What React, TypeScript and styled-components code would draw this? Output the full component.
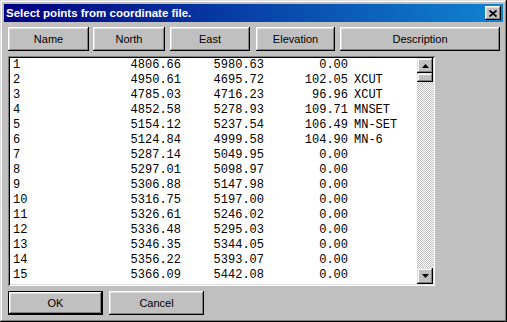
import React from 'react';
import styled, { createGlobalStyle } from 'styled-components';

const GlobalStyle = createGlobalStyle`
  html, body {
    margin: 0;
    padding: 0;
    background: #c0c0c0;
  }
  body {
    font-family: "Liberation Sans", Arial, sans-serif;
  }
`;

interface Point {
  id: string,
  north: string,
  east: string,
  elev: string,
  desc: string,
}

const points: Point[] = [
  { id: '1', north: '4806.66', east: '5980.63', elev: '0.00', desc: '' },
  { id: '2', north: '4950.61', east: '4695.72', elev: '102.05', desc: 'XCUT' },
  { id: '3', north: '4785.03', east: '4716.23', elev: '96.96', desc: 'XCUT' },
  { id: '4', north: '4852.58', east: '5278.93', elev: '109.71', desc: 'MNSET' },
  { id: '5', north: '5154.12', east: '5237.54', elev: '106.49', desc: 'MN-SET' },
  { id: '6', north: '5124.84', east: '4999.58', elev: '104.90', desc: 'MN-6' },
  { id: '7', north: '5287.14', east: '5049.95', elev: '0.00', desc: '' },
  { id: '8', north: '5297.01', east: '5098.97', elev: '0.00', desc: '' },
  { id: '9', north: '5306.88', east: '5147.98', elev: '0.00', desc: '' },
  { id: '10', north: '5316.75', east: '5197.00', elev: '0.00', desc: '' },
  { id: '11', north: '5326.61', east: '5246.02', elev: '0.00', desc: '' },
  { id: '12', north: '5336.48', east: '5295.03', elev: '0.00', desc: '' },
  { id: '13', north: '5346.35', east: '5344.05', elev: '0.00', desc: '' },
  { id: '14', north: '5356.22', east: '5393.07', elev: '0.00', desc: '' },
  { id: '15', north: '5366.09', east: '5442.08', elev: '0.00', desc: '' },
];

const columns = [
  { label: 'Name', w: 81, gap: 0 },
  { label: 'North', w: 72, gap: 4 },
  { label: 'East', w: 80, gap: 5 },
  { label: 'Elevation', w: 79, gap: 6 },
  { label: 'Description', w: 160, gap: 5 },
];

const Window = styled.div`
  width: 507px;
  height: 322px;
  box-sizing: border-box;
  padding: 4px;
  background: #c0c0c0;
  box-shadow: inset -1px -1px #000, inset 1px 1px #dfdfdf,
    inset -2px -2px #808080, inset 2px 2px #fff;
  display: flex;
  flex-direction: column;
`;

const TitleBar = styled.div`
  height: 18px;
  display: flex;
  align-items: center;
  justify-content: space-between;
  padding: 0 2px 0 2px;
  background: linear-gradient(to right, #000080, #1084d0);
`;

const Title = styled.span`
  color: #fff;
  font-weight: bold;
  font-size: 11.5px;
`;

const CloseButton = styled.div`
  width: 16px;
  height: 14px;
  background: #c0c0c0;
  box-shadow: inset -1px -1px #000, inset 1px 1px #fff,
    inset -2px -2px #808080, inset 2px 2px #dfdfdf;
  display: flex;
  align-items: center;
  justify-content: center;
`;

const Body = styled.div`
  padding: 0 3px 0 4px;
  display: flex;
  flex-direction: column;
`;

const HeaderRow = styled.div`
  display: flex;
  margin-top: 5px;
`;

const Button = styled.div<{ $w: number, $gap?: number, $default?: boolean }>`
  width: ${p => p.$w}px;
  height: 24px;
  margin-left: ${p => p.$gap || 0}px;
  box-sizing: border-box;
  display: flex;
  align-items: center;
  justify-content: center;
  font-size: 11px;
  color: #000;
  background: #c0c0c0;
  box-shadow: ${p => p.$default
    ? 'inset 0 0 0 1px #000, inset -2px -2px #000, inset 2px 2px #fff, inset -3px -3px #808080, inset 3px 3px #dfdfdf'
    : 'inset -1px -1px #000, inset 1px 1px #fff, inset -2px -2px #808080, inset 2px 2px #dfdfdf'};
`;

const ListBox = styled.div`
  margin-top: 5px;
  width: 427px;
  height: 230px;
  box-sizing: border-box;
  padding: 2px;
  background: #fff;
  box-shadow: inset 1px 1px #808080, inset -1px -1px #fff,
    inset 2px 2px #000, inset -2px -2px #dfdfdf;
  display: flex;
`;

const Rows = styled.div`
  flex: 1;
  overflow: hidden;
  padding-left: 3px;
  font-family: "Liberation Mono", "Courier New", monospace;
  font-size: 12px;
  color: #000;
`;

const Row = styled.div`
  display: grid;
  grid-template-columns: 97px 71px 83px 84px auto;
  height: 15px;
  line-height: 15px;
  white-space: pre;
`;

const Cell = styled.span<{ $num?: boolean }>`
  text-align: ${p => p.$num ? 'right' : 'left'};
`;

const Desc = styled.span`
  padding-left: 6px;
`;

const ScrollBar = styled.div`
  width: 16px;
  display: flex;
  flex-direction: column;
`;

const ScrollButton = styled.div<{ $h: number }>`
  height: ${p => p.$h}px;
  background: #c0c0c0;
  box-shadow: inset -1px -1px #000, inset 1px 1px #dfdfdf,
    inset -2px -2px #808080, inset 2px 2px #fff;
  display: flex;
  align-items: center;
  justify-content: center;
`;

const Track = styled.div`
  flex: 1;
  background-image: conic-gradient(#c0c0c0 25%, #fff 0 50%, #c0c0c0 0 75%, #fff 0);
  background-size: 2px 2px;
`;

const Footer = styled.div`
  display: flex;
  margin-top: 5px;
`;

const Arrow: React.FC<{ down?: boolean }> = ({ down }) => (
  <svg width="7" height="4" viewBox="0 0 7 4">
    <polygon points={down ? '0,0 7,0 3.5,4' : '3.5,0 7,4 0,4'} fill="#000" />
  </svg>
);

const CloseIcon = () => (
  <svg width="8" height="7" viewBox="0 0 8 7">
    <path d="M0.5 0.5 L7.5 6.5 M7.5 0.5 L0.5 6.5" stroke="#000" strokeWidth="1.8" />
  </svg>
);

export default function App() {
  return (
    <>
      <GlobalStyle />
      <Window>
        <TitleBar>
          <Title>Select points from coordinate file.</Title>
          <CloseButton><CloseIcon /></CloseButton>
        </TitleBar>
        <Body>
          <HeaderRow>
            {columns.map(c => (
              <Button key={c.label} $w={c.w} $gap={c.gap}>{c.label}</Button>
            ))}
          </HeaderRow>
          <ListBox>
            <Rows>
              {points.map(p => (
                <Row key={p.id}>
                  <Cell>{p.id}</Cell>
                  <Cell $num>{p.north}</Cell>
                  <Cell $num>{p.east}</Cell>
                  <Cell $num>{p.elev}</Cell>
                  <Desc>{p.desc}</Desc>
                </Row>
              ))}
            </Rows>
            <ScrollBar>
              <ScrollButton $h={15}><Arrow /></ScrollButton>
              <ScrollButton $h={9} />
              <Track />
              <ScrollButton $h={16}><Arrow down /></ScrollButton>
            </ScrollBar>
          </ListBox>
          <Footer>
            <Button $w={95} $default>OK</Button>
            <Button $w={95} $gap={6}>Cancel</Button>
          </Footer>
        </Body>
      </Window>
    </>
  );
}
